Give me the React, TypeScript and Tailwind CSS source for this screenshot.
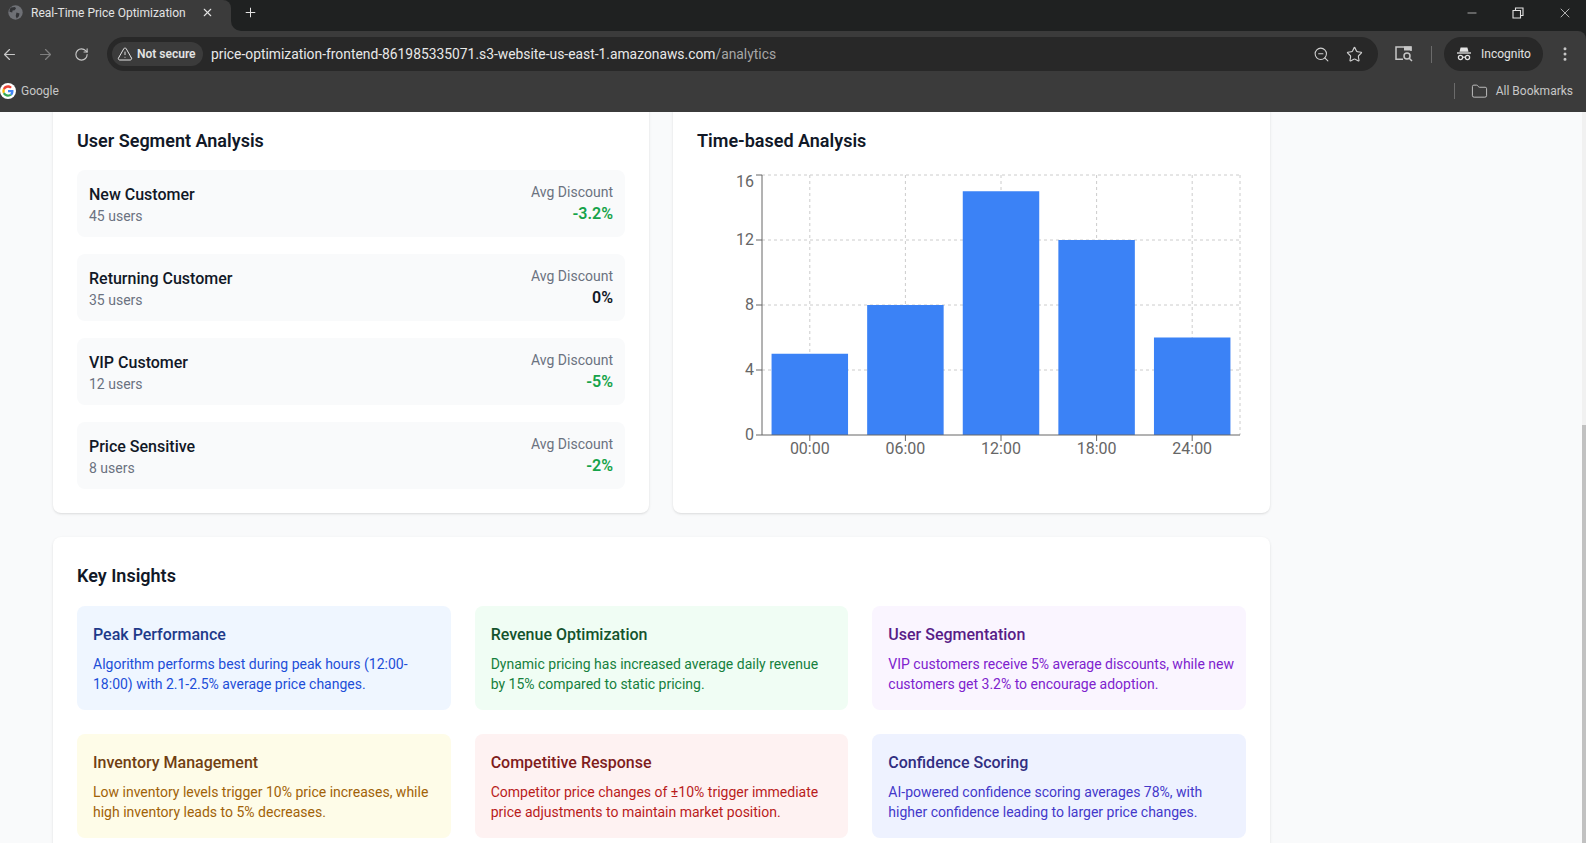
import React from 'react';
import {
  ArrowLeft,
  ArrowRight,
  RotateCw,
  TriangleAlert,
  ZoomOut,
  Star,
  EllipsisVertical,
  Folder,
  X,
  Plus,
  Minus,
} from 'lucide-react';

const segments = [
  { name: 'New Customer', users: 45, discount: '-3.2%', color: 'text-[#16a34a]' },
  { name: 'Returning Customer', users: 35, discount: '0%', color: 'text-[#111827]' },
  { name: 'VIP Customer', users: 12, discount: '-5%', color: 'text-[#16a34a]' },
  { name: 'Price Sensitive', users: 8, discount: '-2%', color: 'text-[#16a34a]' },
];

const insights = [
  {
    title: 'Peak Performance',
    text: 'Algorithm performs best during peak hours (12:00-\n18:00) with 2.1-2.5% average price changes.',
    box: 'bg-[#eff6ff]',
    head: 'text-[#1e3a8a]',
    body: 'text-[#1d4ed8]',
  },
  {
    title: 'Revenue Optimization',
    text: 'Dynamic pricing has increased average daily revenue\nby 15% compared to static pricing.',
    box: 'bg-[#f0fdf4]',
    head: 'text-[#14532d]',
    body: 'text-[#15803d]',
  },
  {
    title: 'User Segmentation',
    text: 'VIP customers receive 5% average discounts, while new\ncustomers get 3.2% to encourage adoption.',
    box: 'bg-[#faf5ff]',
    head: 'text-[#581c87]',
    body: 'text-[#7e22ce]',
  },
  {
    title: 'Inventory Management',
    text: 'Low inventory levels trigger 10% price increases, while\nhigh inventory leads to 5% decreases.',
    box: 'bg-[#fefce8]',
    head: 'text-[#713f12]',
    body: 'text-[#a16207]',
  },
  {
    title: 'Competitive Response',
    text: 'Competitor price changes of ±10% trigger immediate\nprice adjustments to maintain market position.',
    box: 'bg-[#fef2f2]',
    head: 'text-[#7f1d1d]',
    body: 'text-[#b91c1c]',
  },
  {
    title: 'Confidence Scoring',
    text: 'AI-powered confidence scoring averages 78%, with\nhigher confidence leading to larger price changes.',
    box: 'bg-[#eef2ff]',
    head: 'text-[#312e81]',
    body: 'text-[#4338ca]',
  },
];

const chartData = [
  { time: '00:00', value: 5 },
  { time: '06:00', value: 8 },
  { time: '12:00', value: 15 },
  { time: '18:00', value: 12 },
  { time: '24:00', value: 6 },
];

const Chart = () => {
  const left = 65;
  const right = 543;
  const top = 5;
  const bottom = 265;
  const band = (right - left) / chartData.length;
  const unit = (bottom - top) / 16;
  const ticks = [0, 4, 8, 12, 16];

  return (
    <svg width="548" height="300" viewBox="0 0 548 300" className="block">
      <g stroke="#cccccc" strokeDasharray="3 3" fill="none">
        {ticks.slice(1).map((t) => (
          <line key={t} x1={left} x2={right} y1={bottom - t * unit} y2={bottom - t * unit} />
        ))}
        {chartData.map((d, i) => (
          <line key={d.time} x1={left + band * (i + 0.5)} x2={left + band * (i + 0.5)} y1={top} y2={bottom} />
        ))}
        <line x1={right} x2={right} y1={top} y2={bottom} />
      </g>
      {chartData.map((d, i) => (
        <rect
          key={d.time}
          x={left + band * i + band * 0.1}
          y={bottom - d.value * unit}
          width={band * 0.8}
          height={d.value * unit}
          fill="#3b82f6"
        />
      ))}
      <g stroke="#666666" fill="none">
        <line x1={left} x2={left} y1={top} y2={bottom} />
        <line x1={left} x2={right} y1={bottom} y2={bottom} />
        {ticks.map((t) => (
          <line key={t} x1={left - 6} x2={left} y1={bottom - t * unit} y2={bottom - t * unit} />
        ))}
        {chartData.map((d, i) => (
          <line key={d.time} x1={left + band * (i + 0.5)} x2={left + band * (i + 0.5)} y1={bottom} y2={bottom + 6} />
        ))}
      </g>
      <g fill="#666666" fontSize="16">
        {ticks.map((t) => (
          <text key={t} x={left - 8} y={t === 16 ? top + 12 : bottom - t * unit + 5} textAnchor="end">
            {t}
          </text>
        ))}
        {chartData.map((d, i) => (
          <text key={d.time} x={left + band * (i + 0.5)} y={bottom + 19} textAnchor="middle">
            {d.time}
          </text>
        ))}
      </g>
    </svg>
  );
};

const IncognitoIcon = () => (
  <svg width="16" height="16" viewBox="0 0 16 16" fill="none" stroke="#e3e3e3">
    <path d="M4.6 1.5h6.8l1.1 4.2h-9z" fill="#e3e3e3" stroke="none" />
    <path d="M1 7h14" strokeWidth="1.3" />
    <circle cx="4.5" cy="11.5" r="2.1" strokeWidth="1.3" />
    <circle cx="11.5" cy="11.5" r="2.1" strokeWidth="1.3" />
    <path d="M6.6 11.2h2.8" strokeWidth="1.2" />
  </svg>
);

const TabSearchIcon = () => (
  <svg width="20" height="18" viewBox="0 0 20 18" fill="none" stroke="#c7c7c7" strokeWidth="1.5">
    <path d="M9 14.2H2V2h15v4" />
    <path d="M10 1.5h7.5v4H10z" fill="#c7c7c7" stroke="none" />
    <circle cx="13" cy="11" r="3" />
    <path d="M15.2 13.2 18 16" />
  </svg>
);

const GlobeIcon = () => (
  <svg width="15" height="15" viewBox="0 0 15 15">
    <circle cx="7.5" cy="7.5" r="7.2" fill="#6e7075" />
    <path d="M3 2.6 7 2l1 1.6-1.4 1.6-2 .4-.4 2-2.6-.8C1.4 5 2 3.6 3 2.6zM8.5 7.6l3 1-.6 2.6-2.2 2.4-1-2.6z" fill="#323336" />
  </svg>
);

const GoogleIcon = () => (
  <svg width="16" height="16" viewBox="0 0 48 48" className="rounded-full bg-white">
    <path fill="#EA4335" d="M24 14c2.9 0 5 1.1 6.6 2.6l4.9-4.9C32.4 8.8 28.600 7 24 7c-6.600 0-12.300 3.800-15.100 9.300l5.700 4.400C16 16.900 19.600 14 24 14z" />
    <path fill="#4285F4" d="M40.500 24.500c0-1.200-.1-2.300-.3-3.500H24v6.800h9.300c-.4 2.200-1.600 4-3.500 5.200l5.500 4.300c3.200-3 5.200-7.400 5.200-12.800z" />
    <path fill="#FBBC05" d="M14.600 27.300c-.4-1-.6-2.100-.6-3.300s.2-2.300.6-3.300l-5.700-4.400C7.700 18.600 7 21.200 7 24s.7 5.400 1.900 7.700z" />
    <path fill="#34A853" d="M24 41c4.600 0 8.400-1.500 11.300-4.200L29.800 33c-1.500 1-3.400 1.600-5.800 1.600-4.400 0-8-2.900-9.400-6.800l-5.700 4.400C11.700 37.200 17.400 41 24 41z" />
  </svg>
);

const BrowserChrome = () => (
  <header className="bg-[#1f2121] text-[#e3e3e3]">
    <div className="flex h-[31px]">
      <div className="flex w-[231px] items-center rounded-tr-[8px] bg-[#3b3b3b] pl-2 pb-[6px]">
        <GlobeIcon />
        <span className="ml-2 w-[168px] truncate text-[12px]">Real-Time Price Optimization</span>
        <X size={13} strokeWidth={2} className="ml-[2px]" />
      </div>
      <div className="flex-1 bg-[#3b3b3b]">
        <div className="flex h-full items-center rounded-bl-[10px] bg-[#1f2121] pb-[6px] pl-[12px] pr-[13px]">
          <Plus size={15} strokeWidth={1.6} />
          <div className="ml-auto flex items-center gap-[32px]">
            <Minus size={14} strokeWidth={1.2} />
            <svg width="14" height="14" viewBox="0 0 14 14" fill="none" stroke="#e3e3e3" strokeWidth="1.1">
              <path d="M2 4.500h7.500V12H2z" />
              <path d="M4.500 4.500V2H12v7.500H9.500" />
            </svg>
            <X size={16} strokeWidth={1.1} />
          </div>
        </div>
      </div>
    </div>
    <div className="flex h-[44px] items-center rounded-tr-[8px] bg-[#3b3b3b] pl-[1px] pt-[2px]">
      <ArrowLeft size={17} strokeWidth={1.7} className="text-[#c7c7c7]" />
      <ArrowRight size={17} strokeWidth={1.7} className="ml-[19px] text-[#7f7f7f]" />
      <RotateCw size={15} strokeWidth={1.8} className="ml-[20px] text-[#c7c7c7]" />
      <div className="ml-[18px] flex h-[34px] w-[1271px] items-center rounded-full bg-[#282828] pl-[5px]">
        <div className="flex h-[24px] w-[91px] items-center gap-[4px] rounded-full bg-[#3b3b3b] pl-[5px]">
          <TriangleAlert size={16} strokeWidth={1.5} />
          <span className="whitespace-nowrap text-[12px] font-semibold">Not secure</span>
        </div>
        <span className="ml-[8px] whitespace-nowrap text-[13.85px] text-[#e8e8e8]">
          price-optimization-frontend-861985335071.s3-website-us-east-1.amazonaws.com
          <span className="text-[#a6a6a6]">/analytics</span>
        </span>
        <ZoomOut size={17} strokeWidth={1.5} className="ml-auto mr-[1px] text-[#d0d0d0]" />
        <Star size={17} strokeWidth={1.6} className="ml-[15px] mr-[15px] text-[#d0d0d0]" />
      </div>
      <div className="ml-[16px]">
        <TabSearchIcon />
      </div>
      <div className="ml-[17px] h-[17px] w-[1px] bg-[#6b6b6b]" />
      <div className="ml-[12px] flex h-[34px] w-[99px] items-center rounded-full bg-[#282828] pl-[12px]">
        <IncognitoIcon />
        <span className="ml-[9px] text-[12px]">Incognito</span>
      </div>
      <EllipsisVertical size={18} strokeWidth={2} className="ml-[13px] text-[#c7c7c7]" />
    </div>
    <div className="flex h-[37px] items-center bg-[#3b3b3b] pb-[5px]">
      <GoogleIcon />
      <span className="ml-[5px] text-[12px] text-[#c7c7c7]">Google</span>
      <div className="ml-auto h-[16px] w-[1px] bg-[#6b6b6b]" />
      <Folder size={17} strokeWidth={1.3} className="ml-[16px] text-[#c7c7c7]" />
      <span className="ml-[8px] mr-[13px] text-[12px] text-[#c7c7c7]">All Bookmarks</span>
    </div>
  </header>
);

const App = () => {
  return (
    <div className="flex h-[843px] w-full flex-col overflow-hidden bg-[#f9fafb] font-['Roboto','Open_Sans',sans-serif]">
      <BrowserChrome />
      <div className="flex min-h-0 flex-1">
        <main className="min-w-0 flex-1 overflow-hidden pl-[53px]">
          <div className="-mt-[10px] w-[1217px]">
            <div className="grid grid-cols-[596px_597px] gap-6">
              <section className="rounded-lg bg-white p-6 shadow">
                <h3 className="mb-[15px] pt-[1px] text-[18px] font-semibold leading-7 text-[#111827]">User Segment Analysis</h3>
                <div className="flex flex-col gap-[17px]">
                  {segments.map((s) => (
                    <div key={s.name} className="flex h-[67px] items-center justify-between rounded-lg bg-[#f9fafb] px-3">
                      <div>
                        <p className="-mb-[2px] text-[16px] font-medium leading-[26px] text-[#111827]">{s.name}</p>
                        <p className="text-[14px] leading-5 text-[#6b7280]">{s.users} users</p>
                      </div>
                      <div className="text-right">
                        <p className="text-[14px] leading-5 text-[#6b7280]">Avg Discount</p>
                        <p className={`text-[16px] font-semibold leading-6 ${s.color}`}>{s.discount}</p>
                      </div>
                    </div>
                  ))}
                </div>
              </section>
              <section className="rounded-lg bg-white p-6 shadow">
                <h3 className="mb-[15px] pt-[1px] text-[18px] font-semibold leading-7 text-[#111827]">Time-based Analysis</h3>
                <Chart />
              </section>
            </div>
            <section className="mt-6 rounded-lg bg-white p-6 shadow">
              <h3 className="mb-[16px] pt-[1px] text-[18px] font-semibold leading-7 text-[#111827]">Key Insights</h3>
              <div className="grid grid-cols-3 gap-6">
                {insights.map((c) => (
                  <div key={c.title} className={`rounded-lg p-4 ${c.box}`}>
                    <h4 className={`mb-[7px] pt-[1px] text-[16px] font-medium leading-6 ${c.head}`}>{c.title}</h4>
                    <p className={`whitespace-pre text-[14px] leading-5 ${c.body}`}>{c.text}</p>
                  </div>
                ))}
              </div>
            </section>
          </div>
        </main>
        <div className="flex w-[4px] flex-col bg-[#f1f1f1]">
          <div className="h-[313px]" />
          <div className="flex-1 bg-[#c1c1c1]" />
        </div>
      </div>
    </div>
  );
};

export default App;
